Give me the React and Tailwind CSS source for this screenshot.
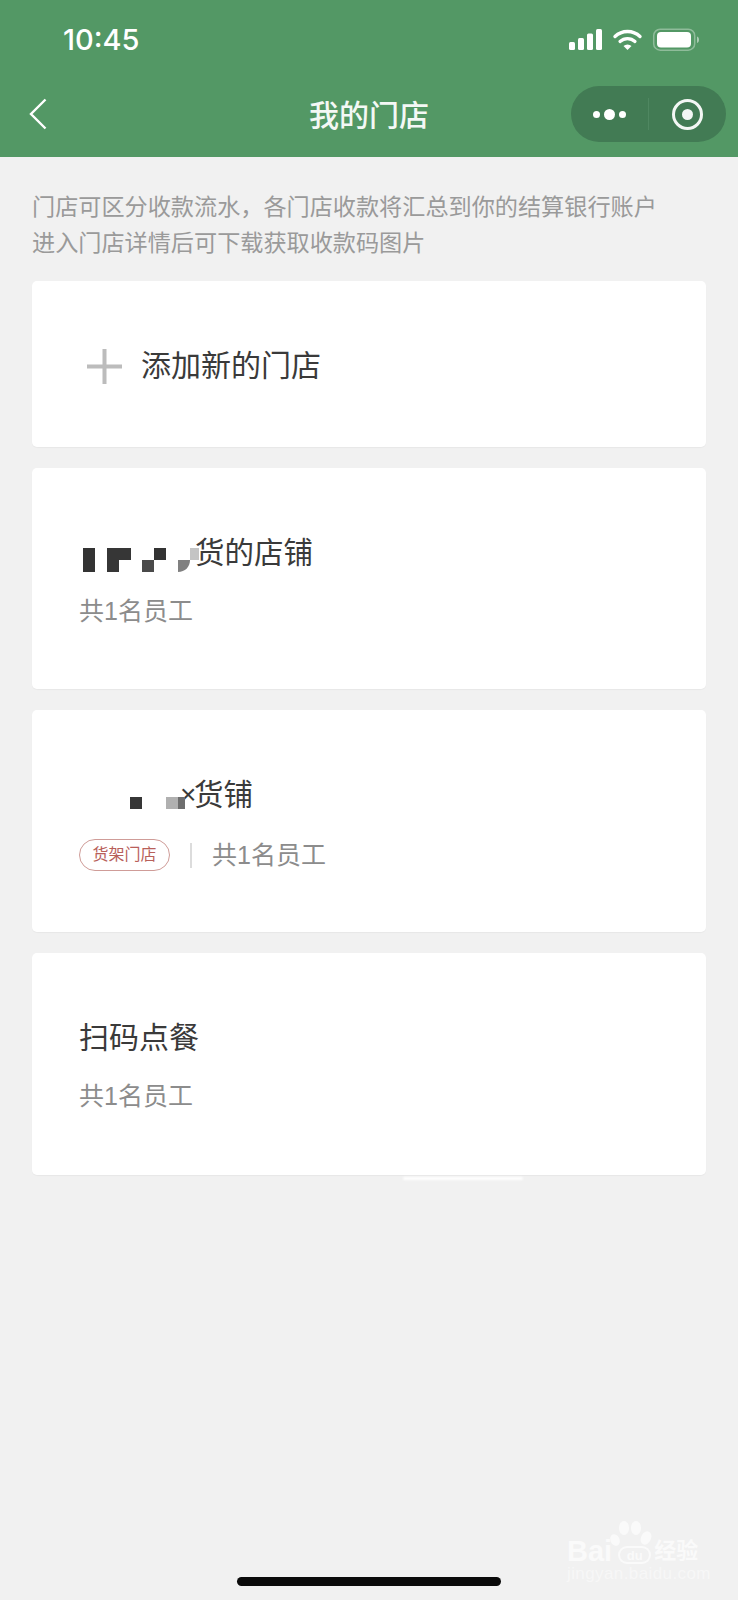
import React from "react";

const cjk = { fontFamily: '"Liberation Sans", "Noto Sans CJK SC", sans-serif' };

// status bar icons
const StatusIcons = () => (
  <svg width="130" height="24" viewBox="0 0 130 24" fill="none">
    <rect x="0" y="14" width="6" height="8" rx="1.5" fill="#fff" />
    <rect x="9" y="10" width="6" height="12" rx="1.5" fill="#fff" />
    <rect x="18" y="5.5" width="6" height="16.5" rx="1.5" fill="#fff" />
    <rect x="27" y="1" width="6" height="21" rx="1.5" fill="#fff" />
    <path d="M46 8.500a18 18 0 0 1 25 0" stroke="#fff" strokeWidth="3.400" strokeLinecap="round" />
    <path d="M51 13.500a11 11 0 0 1 15 0" stroke="#fff" strokeWidth="3.200" strokeLinecap="round" />
    <path d="M54.500 18l4 4 4-4a5.800 5.800 0 0 0-8 0z" fill="#fff" />
    <rect x="84.700" y="1.200" width="41" height="21" rx="6.500" stroke="#fff" strokeOpacity="0.35" strokeWidth="1.500" />
    <rect x="88" y="4" width="34" height="15.500" rx="4" fill="#fff" />
    <path d="M128 8.500c1.500.4 2 2 2 3.200s-.5 2.800-2 3.200z" fill="#fff" fillOpacity="0.5" />
  </svg>
);

const Capsule = () => (
  <div className="flex h-[56px] w-[155px] items-center rounded-full bg-[#427b54]">
    <div className="flex h-full w-[77px] items-center justify-center gap-[4px]">
      <span className="h-[7px] w-[7px] rounded-full bg-white" />
      <span className="h-[11px] w-[11px] rounded-full bg-white" />
      <span className="h-[7px] w-[7px] rounded-full bg-white" />
    </div>
    <div className="h-[32px] w-px bg-[#4f8761]" />
    <div className="flex flex-1 items-center justify-center">
      <div className="flex h-[31px] w-[31px] items-center justify-center rounded-full border-[3.5px] border-[#f3f7f4]">
        <span className="h-[11px] w-[11px] rounded-full bg-[#f3f7f4]" />
      </div>
    </div>
  </div>
);

// pixelated part of the store names
const MosaicOne = () => (
  <svg width="116" height="40" viewBox="0 0 116 40" className="relative z-10 shrink-0 overflow-visible">
    <rect x="4" y="15" width="12" height="24" fill="#333" />
    <path d="M28 15h24v12h-12v12h-12z" fill="#363636" />
    <rect x="63" y="27" width="12" height="12" fill="#4a4a4a" />
    <rect x="75" y="15" width="12" height="12" fill="#333" />
    <path d="M99 27h12c0 7-5 12-12 12z" fill="#808080" />
    <rect x="111" y="15" width="9" height="12" fill="#c4c4c4" />
  </svg>
);

const MosaicTwo = () => (
  <svg width="101" height="40" viewBox="0 0 101 40" className="relative z-10 shrink-0 overflow-visible">
    <rect x="51" y="22" width="12" height="12" fill="#363636" />
    <rect x="87" y="22" width="12" height="12" fill="#b0b0b0" />
    <rect x="99" y="22" width="7" height="12" fill="#6e6e6e" />
  </svg>
);

const StaffCount = () => (
  <span className="text-[25px] leading-[34px] text-[#8c8c8c]">共1名员工</span>
);

const Card = ({ className, children }) => (
  <div className={`rounded-[5px] bg-white shadow-[0_1px_1px_rgba(0,0,0,0.04)] ${className}`}>{children}</div>
);

export default function App() {
  return (
    <div className="relative flex h-[1600px] w-[738px] flex-col overflow-hidden bg-[#f1f1f1]" style={cjk}>
      {/* header */}
      <div className="h-[157px] bg-[#539865]">
        <div className="flex h-[80px] items-center justify-between pl-[63px] pr-[39px]">
          <span className="text-[29px] font-medium text-white" style={{ fontFamily: "Inter, sans-serif" }}>10:45</span>
          <StatusIcons />
        </div>
        <div className="mt-[6px] grid grid-cols-[1fr_auto_1fr] items-center">
          <svg width="18" height="32" viewBox="0 0 18 32" fill="none" className="ml-[29px]">
            <path d="M16.500 1.500L2 16l14.500 14.500" stroke="#fff" strokeWidth="2.400" />
          </svg>
          <span className="mt-[4px] text-[30px] leading-[40px] font-medium text-[#f4f8f5]">我的门店</span>
          <div className="flex justify-end pr-[12px]">
            <Capsule />
          </div>
        </div>
      </div>

      {/* intro */}
      <div className="mx-[32px] mb-[20px] mt-[33px] whitespace-nowrap text-[23.150px] leading-[35.500px] text-[#9a9a9a]">
        <p>门店可区分收款流水，各门店收款将汇总到你的结算银行账户</p>
        <p>进入门店详情后可下载获取收款码图片</p>
      </div>

      {/* cards */}
      <div className="mx-[32px] flex flex-col gap-[21px]">
        <Card className="flex h-[166px] items-center gap-[19px] pl-[55px]">
          <svg width="35" height="35" viewBox="0 0 35 35" className="mt-[5px]">
            <path d="M17.500 0v35M0 17.500h35" stroke="#bcbcbc" strokeWidth="4" />
          </svg>
          <span className="mt-[4px] text-[30px] leading-[40px] text-[#3a3a3a]">添加新的门店</span>
        </Card>

        <Card className="h-[221px] pl-[47px] pt-[65px]">
          <div className="flex h-[40px] items-center text-[29.500px] text-[#3a3a3a]">
            <MosaicOne />
            <span>货的店铺</span>
          </div>
          <div className="mt-[21px]">
            <StaffCount />
          </div>
        </Card>

        <Card className="h-[222px] pl-[47px] pt-[65px]">
          <div className="flex h-[40px] items-center text-[29.500px] text-[#3a3a3a]">
            <MosaicTwo />
            <span className="w-[14px] text-[28px] leading-[40px]">×</span>
            <span>货铺</span>
          </div>
          <div className="mt-[23px] flex h-[34px] items-center">
            <span className="flex h-[32px] w-[91px] items-center justify-center rounded-full border border-[#cf9c98] text-[16px] text-[#b8605a]">
              货架门店
            </span>
            <span className="mx-[20px] h-[25px] w-[2px] bg-[#dcdcdc]" />
            <StaffCount />
          </div>
        </Card>

        <Card className="relative h-[222px] pl-[47px] pt-[64px]">
          <div className="flex h-[40px] items-center text-[30px] text-[#3a3a3a]">扫码点餐</div>
          <div className="mt-[22px]">
            <StaffCount />
          </div>
          <div className="absolute left-[371px] top-[224px] h-[3px] w-[120px] rounded-full bg-white blur-[1px]" />
        </Card>
      </div>

      {/* home indicator */}
      <div className="mx-auto mb-[14px] mt-auto h-[9px] w-[264px] rounded-full bg-[#0a0a0a]" />

      {/* baidu watermark */}
      <div className="absolute left-[567px] top-[1520px] h-[62px] w-[135px] text-[#fafafa]">
        <svg width="44" height="30" viewBox="0 0 44 30" className="absolute left-[42px] top-0" fill="#fafafa">
          <ellipse cx="6" cy="20" rx="4.500" ry="6" transform="rotate(-25 6 20)" />
          <ellipse cx="15" cy="8" rx="5" ry="7" />
          <ellipse cx="27" cy="8" rx="5" ry="7" />
          <ellipse cx="37" cy="18" rx="5" ry="7" transform="rotate(25 37 18)" />
        </svg>
        <div className="absolute left-0 top-[18px] flex items-center text-[29px] font-bold leading-[26px]">
          <span>Bai</span>
          <span className="ml-[6px] mt-[8px] flex h-[18px] w-[33px] items-center justify-center rounded-full border-2 border-[#fafafa] text-[13px] leading-none">du</span>
          <span className="ml-[3px] text-[22px]">经验</span>
        </div>
        <div className="absolute left-0 top-[45px] whitespace-nowrap text-[17px] leading-[18px] tracking-[0.4px] text-[#f7f7f7]">jingyan.baidu.com</div>
      </div>
    </div>
  );
}
